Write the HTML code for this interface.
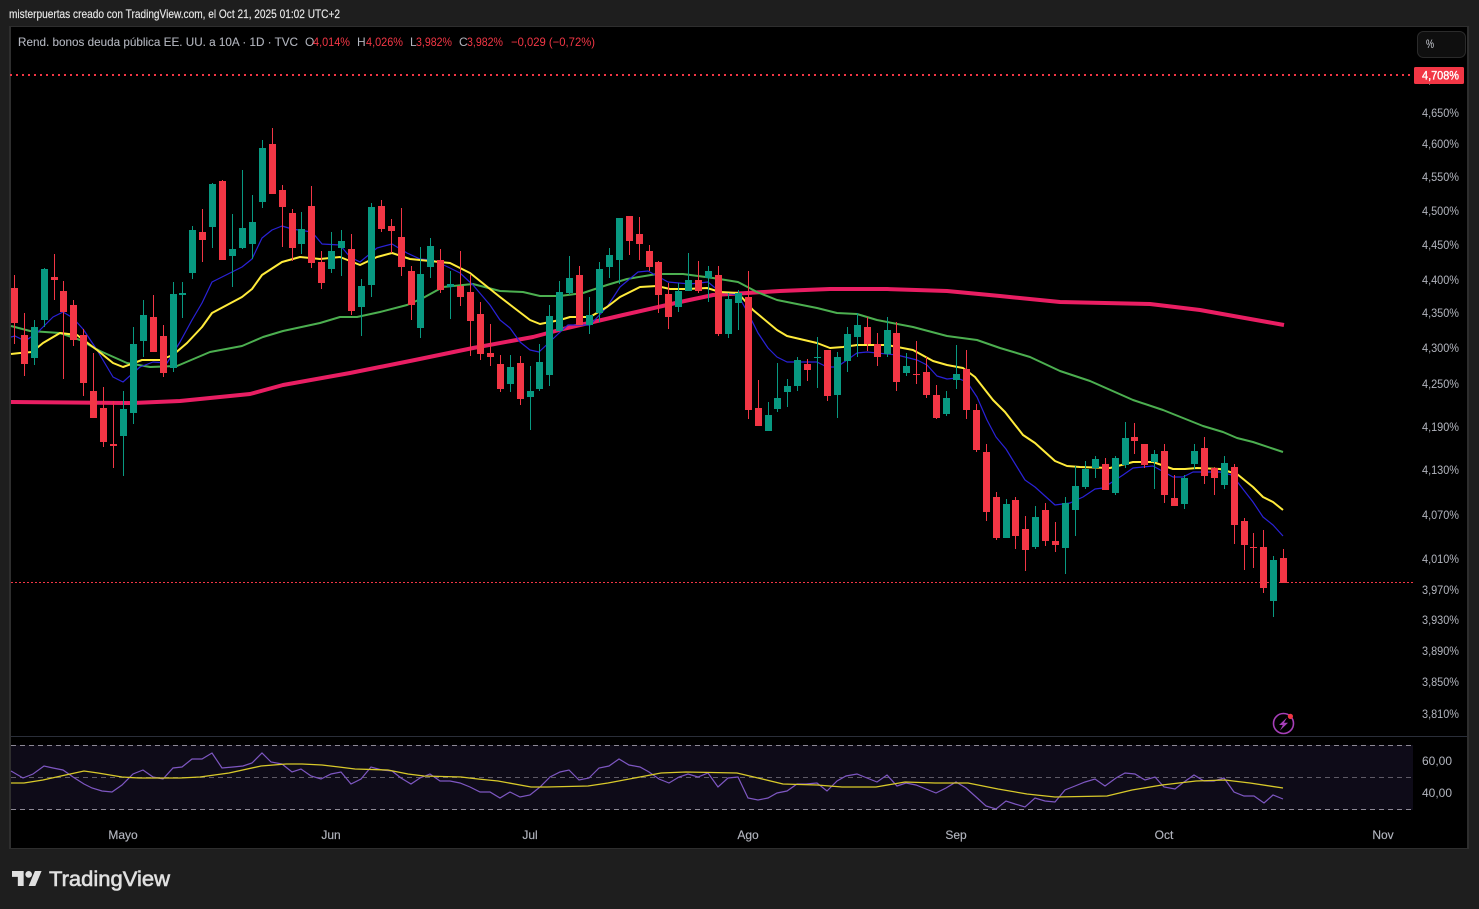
<!DOCTYPE html>
<html lang="es"><head><meta charset="utf-8"><title>TradingView chart</title>
<style>html,body{margin:0;padding:0;background:#1e1e1e;width:1479px;height:909px;overflow:hidden}svg{display:block}text{font-family:"Liberation Sans",sans-serif}</style></head><body>
<svg width="1479" height="909" viewBox="0 0 1479 909" xmlns="http://www.w3.org/2000/svg">
<rect width="1479" height="909" fill="#1e1e1e"/>
<text x="9" y="18" font-size="12" fill="#e8e8e8" stroke="#e8e8e8" stroke-width=".15" textLength="331" lengthAdjust="spacingAndGlyphs">misterpuertas creado con TradingView.com, el Oct 21, 2025 01:02 UTC+2</text>
<rect x="9.5" y="26.5" width="1459" height="822" fill="#000" stroke="#2e2e2e"/>
<rect x="10" y="27" width="1" height="821" fill="#2e2e2e"/>
<rect x="1467" y="27" width="1" height="821" fill="#2e2e2e"/>
<rect x="10" y="848" width="1459" height="1" fill="#2e2e2e"/>

<path d="M10 75H1413" stroke="#f23645" stroke-width="2" stroke-dasharray="2 4"/>
<path d="M11 582.5H1413" stroke="#f23645" stroke-width="1" stroke-dasharray="2 2"/>

<g fill="none" stroke-linejoin="round" stroke-linecap="butt">
<polyline stroke="#e91e63" stroke-width="4" points="11,402 133,403 180,401 250,394 283,385 350,373 410,361 473,348 533,337 563,329 623,315 680,302 713,295 747,293 780,291 830,289 887,289 947,291 1000,296 1060,302 1150,304 1200,310 1284,325"/>
<polyline stroke="#4caf50" stroke-width="2" points="11,326 30,331 60,333 80,340 100,351 127,363 150,367 177,366 210,352 242,346 263,337 283,331 320,323 340,317 357,317 380,312 407,305 423,298 443,287 473,284 500,291 523,292 540,296 560,296 583,293 607,285 627,279 657,274 683,274 713,278 738,282 757,292 777,300 817,308 837,313 857,314 877,320 913,327 947,336 977,340 1000,348 1030,357 1060,371 1090,381 1133,400 1163,410 1203,426 1223,432 1237,438 1253,442 1283,452"/>
<polyline stroke="#2a22d8" stroke-width="1.2" points="11,337 15,336 25,341 37,333 53,317 63,312 73,318 83,329 97,350 113,377 123,382 140,367 153,362 167,363 180,342 192,320 202,303 212,282 242,267 252,259 262,238 272,230 282,226 292,229 312,232 322,244 340,245 350,257 360,262 377,248 392,244 407,253 420,259 433,260 450,268 460,273 473,285 490,305 500,320 510,328 520,342 530,350 539,352 557,335 568,325 590,325 607,307 620,287 638,272 648,271 668,282 690,284 708,282 720,292 738,295 748,313 758,333 768,348 777,357 787,362 817,362 827,367 837,367 857,353 867,352 897,355 917,360 927,365 937,376 947,379 957,378 967,382 977,397 987,420 996,437 1006,449 1025,480 1035,487 1055,505 1070,503 1083,497 1095,489 1103,488 1123,475 1133,468 1153,466 1173,477 1183,477 1193,472 1220,472 1232,475 1253,502 1263,517 1273,525 1283,536"/>
<polyline stroke="#ffeb3b" stroke-width="2" points="11,354 20,353 32,352 43,343 60,333 77,335 97,350 113,363 123,367 142,360 160,360 173,355 187,343 202,327 212,313 242,297 252,289 262,275 282,262 300,257 320,259 340,257 360,265 377,257 392,253 410,259 430,261 450,263 470,273 500,297 513,307 530,320 540,324 560,320 570,317 590,317 607,307 620,297 640,287 657,286 670,289 687,289 707,288 720,292 738,293 753,310 777,330 787,336 817,343 830,348 843,347 857,345 887,345 913,350 933,361 947,365 963,368 975,377 993,400 1005,412 1023,435 1035,443 1055,461 1067,466 1080,467 1110,468 1133,462 1153,462 1173,469 1185,469 1197,468 1220,469 1237,474 1253,487 1263,497 1273,502 1283,510"/>
</g>

<g fill="none" stroke-width="1">
<path stroke="#f23645" d="M14.5 275V344M24.5 313V376M54.5 254V300M63.5 281V379M73.5 300V346M83.5 329V396M93.5 353V418M103.5 387V447M113.5 401V468M153.5 295V352M163.5 325V377M202.5 209V262M222.5 180V260M272.5 128V194M282.5 185V247M292.5 209V261M311.5 186V268M321.5 251V289M351.5 234V315M381.5 200V232M391.5 219V253M401.5 208V276M411.5 266V320M440.5 249V293M460.5 251V306M470.5 275V356M480.5 302V360M490.5 324V366M500.5 355V392M520.5 356V405M579.5 266V325M629.5 216V255M639.5 217V260M649.5 245V271M658.5 261V313M668.5 283V329M698.5 261V293M718.5 266V336M748.5 271V419M758.5 380V426M807.5 359V381M827.5 350V401M867.5 317V351M877.5 333V366M896.5 322V391M916.5 341V384M926.5 357V398M936.5 385V419M966.5 350V419M976.5 404V452M986.5 444V521M996.5 492V540M1015.5 497V549M1025.5 516V571M1045.5 503V546M1055.5 522V552M1105.5 458V490M1134.5 423V454M1144.5 444V468M1164.5 444V503M1174.5 475V506M1204.5 437V484M1214.5 467V495M1234.5 464V544M1244.5 518V570M1253.5 533V568M1263.5 530V593M1283.5 549V583"/>
<path stroke="#089981" d="M34.5 320V365M44.5 268V327M123.5 391V476M133.5 327V424M143.5 300V357M173.5 282V372M182.5 282V318M192.5 226V279M212.5 183V248M232.5 214V287M242.5 170V249M252.5 195V259M262.5 140V208M301.5 212V254M331.5 232V273M341.5 230V276M361.5 279V336M371.5 203V297M420.5 247V338M430.5 238V278M450.5 271V319M510.5 355V392M530.5 366V430M539.5 344V391M549.5 305V386M559.5 281V331M569.5 256V295M589.5 297V334M599.5 262V322M609.5 248V278M619.5 218V284M678.5 283V312M688.5 253V291M708.5 266V302M728.5 293V338M738.5 290V330M768.5 402V431M777.5 363V412M787.5 379V407M797.5 357V391M817.5 337V388M837.5 352V418M847.5 327V372M857.5 313V357M887.5 317V357M906.5 353V376M946.5 391V416M956.5 345V389M1006.5 499V538M1035.5 506V549M1065.5 497V574M1075.5 466V536M1085.5 461V489M1095.5 456V478M1115.5 456V495M1125.5 422V468M1154.5 450V489M1184.5 475V509M1194.5 444V469M1224.5 456V489M1273.5 556V617"/>
</g>
<g fill="none" stroke-width="7">
<path stroke="#f23645" d="M14.5 288V323M24.5 335V364M54.5 277V280M63.5 291V312M73.5 305V340M83.5 335V383M93.5 391V418M103.5 408V442M113.5 444V446M153.5 317V352M163.5 336V373M202.5 232V240M222.5 181V260M272.5 144V194M282.5 190V207M292.5 213V248M311.5 206V263M321.5 262V283M351.5 249V311M381.5 206V229M391.5 226V231M401.5 237V267M411.5 271V305M440.5 260V290M460.5 286V297M470.5 292V321M480.5 314V354M490.5 353V357M500.5 364V389M520.5 363V399M579.5 275V325M629.5 216V241M639.5 234V244M649.5 251V267M658.5 262V295M668.5 294V317M698.5 280V291M718.5 275V334M748.5 297V410M758.5 408V426M807.5 364V370M827.5 350V396M867.5 327V344M877.5 344V357M896.5 333V382M916.5 374V375M926.5 372V395M936.5 395V418M966.5 369V410M976.5 410V450M986.5 452V512M996.5 497V538M1015.5 500V536M1025.5 529V550M1045.5 510V541M1055.5 541V545M1105.5 464V490M1134.5 437V441M1144.5 444V465M1164.5 451V495M1174.5 498V506M1204.5 448V476M1214.5 468V478M1234.5 467V525M1244.5 521V545M1253.5 547V548M1263.5 547V588M1283.5 558V583"/>
<path stroke="#089981" d="M34.5 327V358M44.5 269V320M123.5 409V436M133.5 344V413M143.5 315V341M173.5 294V368M182.5 293V295M192.5 230V273M212.5 184V227M232.5 249V256M242.5 228V248M252.5 222V244M262.5 148V202M301.5 229V244M331.5 251V269M341.5 241V248M361.5 286V307M371.5 207V285M420.5 274V328M430.5 246V267M450.5 284V287M510.5 367V384M530.5 391V397M539.5 362V389M549.5 316V375M559.5 292V331M569.5 278V293M589.5 315V325M599.5 269V313M609.5 255V267M619.5 218V260M678.5 291V307M688.5 280V291M708.5 271V278M728.5 299V334M738.5 293V303M768.5 415V431M777.5 398V409M787.5 386V392M797.5 360V386M817.5 357V358M837.5 357V395M847.5 334V361M857.5 325V337M887.5 330V354M906.5 366V373M946.5 398V414M956.5 374V380M1006.5 504V538M1035.5 517V547M1065.5 503V548M1075.5 486V510M1085.5 469V487M1095.5 459V468M1115.5 458V493M1125.5 438V465M1154.5 454V462M1184.5 478V504M1194.5 451V464M1224.5 463V485M1273.5 560V601"/>
</g>

<rect x="11" y="736" width="1456" height="1" fill="#2a2e39"/>
<rect x="11" y="745" width="1402" height="65" fill="#0e0b18"/>
<g stroke="#8d8996" stroke-width="1" stroke-dasharray="5 4">
<path d="M11 745.5H1413"/><path d="M11 809.5H1413"/><path d="M11 777.5H1413" stroke="#5e5a66"/>
</g>
<polyline fill="none" stroke="#7e57c2" stroke-width="1.2" points="11,771 23,778 33,774 44,766 53,768 63,770 73,777 84,784 92,788 102,791 112,792 122,785 133,774 143,770 153,777 163,779 173,768 182,767 192,759 202,759 212,753 222,768 233,767 243,766 252,763 262,753 271,762 282,764 292,772 301,769 311,776 321,779 331,774 341,772 351,784 361,779 371,767 382,770 392,771 401,778 411,784 420,778 430,774 440,781 450,781 460,783 470,787 480,792 490,792 500,798 510,792 520,797 530,795 540,787 550,777 560,772 569,770 579,780 589,778 599,768 609,766 619,759 629,765 640,767 649,772 659,779 669,783 679,777 688,774 698,777 708,773 718,787 728,778 738,777 748,798 758,800 768,798 777,793 787,791 797,784 806,784 817,783 827,791 837,781 846,776 857,774 867,778 877,782 887,775 897,786 906,783 916,785 926,789 936,793 946,788 956,782 966,788 975,796 986,806 996,809 1006,801 1015,804 1025,807 1035,798 1045,801 1055,802 1065,790 1075,786 1085,782 1095,779 1105,786 1116,778 1125,773 1135,774 1145,780 1155,777 1164,787 1175,789 1184,782 1194,775 1204,781 1214,781 1224,778 1234,792 1244,796 1254,796 1264,803 1273,795 1283,799"/>
<polyline fill="none" stroke="#d8c92a" stroke-width="1.3" points="11,783 24,783 43,780 61,776 84,771 98,773 122,777 139,778 180,778 200,777 229,773 261,766 286,764 302,764 322,765 339,767 355,769 388,770 408,774 424,776 461,777 478,779 498,781 531,787 547,787 588,786 608,783 640,777 661,773 686,772 737,773 758,778 783,784 817,785 842,787 876,787 905,782 935,783 968,783 998,789 1027,794 1055,797 1107,796 1132,790 1162,785 1196,781 1225,780 1250,783 1283,788"/>

<circle cx="1283.5" cy="723.5" r="10" fill="none" stroke="#a63fb8" stroke-width="1.6"/>
<path d="M1287 717.5L1279 725H1282.8L1280 730.5L1288 722.7H1284Z" fill="#a63fb8"/>
<circle cx="1290.4" cy="716.4" r="2.6" fill="#f23645"/>

<text x="18" y="46" font-size="12" fill="#b2b5be" stroke="#b2b5be" stroke-width=".1" textLength="280" lengthAdjust="spacingAndGlyphs">Rend. bonos deuda pública EE. UU. a 10A · 1D · TVC</text>
<g font-size="12" fill="#b2b5be"><text x="305" y="46">O</text><text x="357" y="46">H</text><text x="410" y="46">L</text><text x="459" y="46">C</text></g>
<g font-size="12" fill="#f23645">
<text x="313" y="46" textLength="37" lengthAdjust="spacingAndGlyphs">4,014%</text>
<text x="366" y="46" textLength="37" lengthAdjust="spacingAndGlyphs">4,026%</text>
<text x="416" y="46" textLength="36" lengthAdjust="spacingAndGlyphs">3,982%</text>
<text x="467" y="46" textLength="36" lengthAdjust="spacingAndGlyphs">3,982%</text>
<text x="511" y="46" textLength="84" lengthAdjust="spacingAndGlyphs">−0,029 (−0,72%)</text>
</g>

<rect x="1417.5" y="31.5" width="48" height="26" rx="6" fill="#0f0f0f" stroke="#2b2b2b"/>
<text x="1426" y="48" font-size="12" fill="#d1d4dc" textLength="8" lengthAdjust="spacingAndGlyphs">%</text>

<g font-size="12" fill="#b2b5be">
<text x="1422" y="83.5" textLength="37" lengthAdjust="spacingAndGlyphs">4,700%</text>
<text x="1422" y="117" textLength="37" lengthAdjust="spacingAndGlyphs">4,650%</text>
<text x="1422" y="148" textLength="37" lengthAdjust="spacingAndGlyphs">4,600%</text>
<text x="1422" y="181" textLength="37" lengthAdjust="spacingAndGlyphs">4,550%</text>
<text x="1422" y="215" textLength="37" lengthAdjust="spacingAndGlyphs">4,500%</text>
<text x="1422" y="249" textLength="37" lengthAdjust="spacingAndGlyphs">4,450%</text>
<text x="1422" y="284" textLength="37" lengthAdjust="spacingAndGlyphs">4,400%</text>
<text x="1422" y="317" textLength="37" lengthAdjust="spacingAndGlyphs">4,350%</text>
<text x="1422" y="352" textLength="37" lengthAdjust="spacingAndGlyphs">4,300%</text>
<text x="1422" y="388" textLength="37" lengthAdjust="spacingAndGlyphs">4,250%</text>
<text x="1422" y="431" textLength="37" lengthAdjust="spacingAndGlyphs">4,190%</text>
<text x="1422" y="474" textLength="37" lengthAdjust="spacingAndGlyphs">4,130%</text>
<text x="1422" y="519" textLength="37" lengthAdjust="spacingAndGlyphs">4,070%</text>
<text x="1422" y="563" textLength="37" lengthAdjust="spacingAndGlyphs">4,010%</text>
<text x="1422" y="594" textLength="37" lengthAdjust="spacingAndGlyphs">3,970%</text>
<text x="1422" y="624" textLength="37" lengthAdjust="spacingAndGlyphs">3,930%</text>
<text x="1422" y="655" textLength="37" lengthAdjust="spacingAndGlyphs">3,890%</text>
<text x="1422" y="686" textLength="37" lengthAdjust="spacingAndGlyphs">3,850%</text>
<text x="1422" y="718" textLength="37" lengthAdjust="spacingAndGlyphs">3,810%</text>
<text x="1422" y="765" textLength="30" lengthAdjust="spacingAndGlyphs">60,00</text>
<text x="1422" y="797" textLength="30" lengthAdjust="spacingAndGlyphs">40,00</text>
</g>
<rect x="1414" y="67" width="50" height="17" rx="1.5" fill="#f23645"/>
<text x="1422" y="79.5" font-size="12" fill="#fff" stroke="#fff" stroke-width=".35" textLength="37" lengthAdjust="spacingAndGlyphs">4,708%</text>

<g font-size="12" fill="#b2b5be" stroke="#b2b5be" stroke-width=".15" text-anchor="middle">
<text x="123" y="839">Mayo</text><text x="331" y="839">Jun</text><text x="530" y="839">Jul</text><text x="748" y="839">Ago</text><text x="956" y="839">Sep</text><text x="1164" y="839">Oct</text><text x="1383" y="839">Nov</text>
</g>

<g transform="translate(12 867.7) scale(.833)" fill="#e0e0e0"><path d="M14 22H7V11H0V4h14v18zM28 22h-8l7.5-18h8L28 22z"/><circle cx="20" cy="8" r="4"/></g>
<text x="49" y="886" font-size="21" fill="#e0e0e0" stroke="#e0e0e0" stroke-width=".6" textLength="121" lengthAdjust="spacingAndGlyphs">TradingView</text>
</svg>
</body></html>
